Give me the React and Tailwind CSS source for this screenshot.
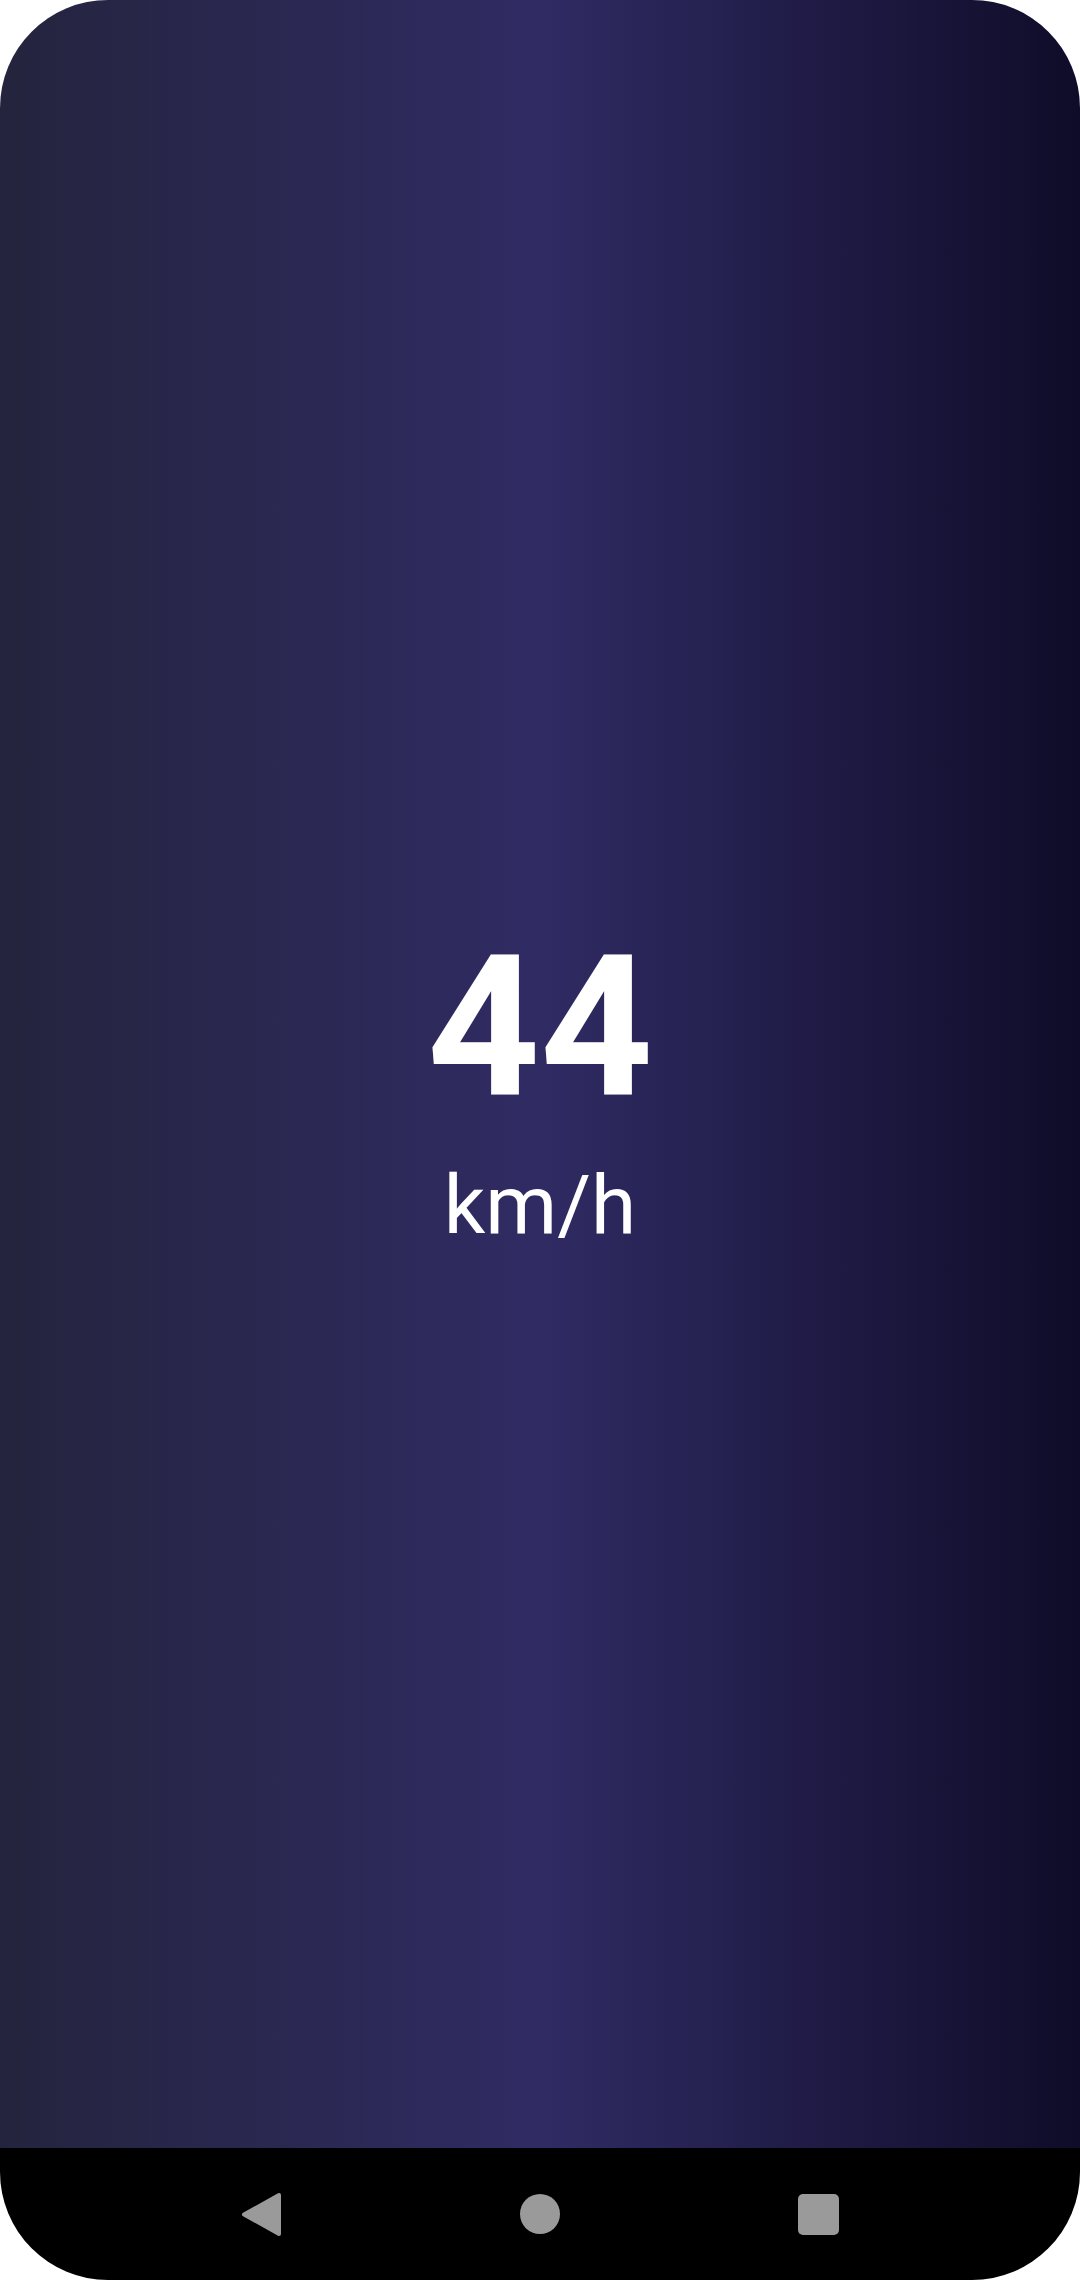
export default function App() {
  return (
    <div className="w-[1080px] h-[2280px] bg-white">
      <div className="w-[1080px] h-[2280px] rounded-[108px] overflow-hidden flex flex-col">
        <div className="h-[2148px] bg-[linear-gradient(to_right,#24243e,#302b63,#0f0c29)] flex flex-col items-center justify-center pt-[26px]">
          <div
            className="text-white font-bold text-[197px] leading-[200px]"
            style={{ fontFamily: "Roboto, 'Noto Sans', sans-serif" }}
          >
            44
          </div>
          <div
            className="text-white text-[82px] leading-[82px] mt-[36px]"
            style={{ fontFamily: "Roboto, 'Noto Sans', sans-serif" }}
          >
            km/h
          </div>
        </div>
        <div className="h-[132px] bg-black flex items-center justify-center gap-[238px]">
          <svg width="41" height="45" viewBox="0 0 41 45">
            <polygon
              points="3,22.5 38,3 38,42"
              fill="#9a9a9a"
              stroke="#9a9a9a"
              strokeWidth="4"
              strokeLinejoin="round"
            />
          </svg>
          <div className="w-[40px] h-[40px] rounded-full bg-[#9a9a9a]" />
          <div className="w-[41px] h-[41px] rounded-[5px] bg-[#9a9a9a]" />
        </div>
      </div>
    </div>
  );
}
